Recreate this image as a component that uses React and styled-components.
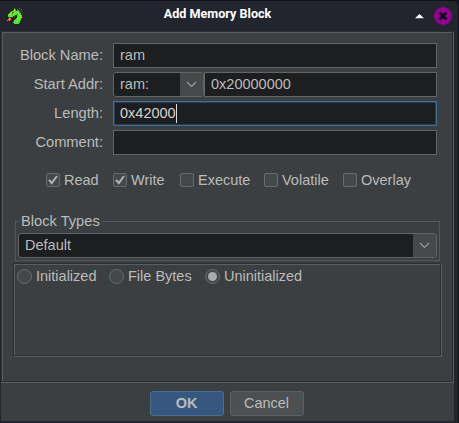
import React from 'react';
import styled, { createGlobalStyle, css } from 'styled-components';

const Global = createGlobalStyle`
  * { box-sizing: border-box; }
  body { margin: 0; background: #14151b; overflow: hidden; }
`;

const Dialog = styled.div`
  width: 459px;
  height: 423px;
  padding: 0 5px 2px 1px;
  background: #22252e;
  border-top: 1px solid #0f1015;
  border-right: 1px solid #14151b;
  border-top-right-radius: 6px;
  font-family: "Liberation Sans", Arial, sans-serif;
  font-size: 14.5px;
  line-height: 17px;
  color: #bbbbbb;
`;

const TitleBar = styled.header`
  display: flex;
  align-items: center;
  height: 30px;
  padding-left: 6px;
  margin-right: -4px;
`;

const Title = styled.h1`
  flex: 1;
  margin: 0;
  padding: 0 3px 4px 0;
  text-align: center;
  font: 700 12.6px/16px Roboto, "Liberation Sans", sans-serif;
  color: #ffffff;
`;

const ShadeIcon = styled.svg`
  width: 9px;
  height: 5px;
  margin-right: 10px;
`;

const CloseButton = styled.svg`
  width: 18px;
  height: 18px;
  margin-right: 5px;
`;

const DragonIcon = styled.svg`
  flex: none;
  width: 16px;
  height: 16px;
`;

const etched = css`
  border: 1px solid #2b2d2e;
  box-shadow: inset 1px 1px 0 #5b5e60, 1px 1px 0 #5b5e60;
`;

const Body = styled.main`
  ${etched}
  display: flex;
  flex-direction: column;
  width: 452px;
  height: 351px;
  padding: 11px 0 0 11px;
  background: #3c3f41;
`;

const Footer = styled.footer`
  display: flex;
  justify-content: center;
  gap: 6px;
  width: 453px;
  height: 39px;
  padding: 8px 2px 0 0;
  background: #3c3f41;
  border-top: 1px solid #5b5e60;
`;

const Form = styled.div`
  display: grid;
  grid-template-columns: 90px 324px;
  column-gap: 10px;
  row-gap: 4px;
`;

const Label = styled.label`
  height: 25px;
  line-height: 25px;
  text-align: right;
  font-size: 14.67px;
`;

const Field = styled.div`
  display: flex;
  align-items: center;
  flex: 1;
  height: 25px;
  padding-left: 6px;
  background: #1d1e20;
  border: 1px solid ${p => (p.$focused ? '#466d94' : '#646464')};
  ${p => p.$focused && 'box-shadow: inset 0 0 0 1px #263f5b; color: #d4d4d4;'}
`;

const Caret = styled.span`
  width: 1px;
  height: 19px;
  background: #dddddd;
`;

const AddressRow = styled.div`
  display: flex;
`;

const ComboBox = styled.div`
  display: flex;
  width: ${p => p.$width}px;
  height: 25px;
  line-height: 23px;
  background: #1d1e20;
  border: 1px solid #646464;
  border-radius: 3px;
  overflow: hidden;
`;

const ComboText = styled.span`
  flex: 1;
  padding-left: 6px;
`;

const ComboArrow = styled.span`
  display: flex;
  align-items: center;
  justify-content: center;
  width: 23px;
  background: #45494a;
`;

const Checks = styled.div`
  display: grid;
  grid-template-columns: 67px 67px 84px 79px 80px;
  margin: 17px 0 0 33px;
  height: 16px;
`;

const CheckItem = styled.div`
  display: flex;
  align-items: center;
  gap: 4px;
  height: 16px;
  white-space: nowrap;
`;

const CheckMark = styled.span`
  display: flex;
  width: 14px;
  height: 14px;
  background: #43494a;
  border: 1px solid #6b6b6b;
  border-radius: 2px;
`;

const Group = styled.fieldset`
  width: 425px;
  height: 48px;
  margin: 25px 0 0 2px;
  padding: 3px 2px 0;
  border: 1px solid #55585a;
`;

const Legend = styled.legend`
  height: 17px;
  margin-left: 1px;
  padding: 0 2px;
  line-height: 17px;
  font-size: 14.67px;
`;

const Options = styled.section`
  ${etched}
  display: flex;
  width: 428px;
  height: 93px;
  margin: 2px 0 0;
  padding: 5px 0 0 3px;
`;

const RadioItem = styled.div`
  display: flex;
  align-items: center;
  gap: 4px;
  width: ${p => p.$width}px;
  height: 15px;
  white-space: nowrap;
`;

const RadioMark = styled.span`
  display: flex;
  align-items: center;
  justify-content: center;
  width: 15px;
  height: 15px;
  background: #43494a;
  border: 1px solid #6b6b6b;
  border-radius: 50%;
`;

const RadioDot = styled.span`
  width: 9px;
  height: 9px;
  border-radius: 50%;
  background: #ababab;
`;

const Button = styled.button`
  width: 74px;
  height: 25px;
  padding: 0;
  font: inherit;
  font-weight: ${p => (p.$primary ? 700 : 400)};
  line-height: 23px;
  color: #bbbbbb;
  background: ${p => (p.$primary ? '#365880' : '#4c5052')};
  border: 1px solid ${p => (p.$primary ? '#4c708c' : '#5e6060')};
  border-radius: 3px;
`;

const dragonPixels = [
  '.......d....d...',
  '......kGd.dkk.d.',
  '....kkgGgkgdkr..',
  '...kgggGgGggdkr.',
  '..kgGrrgGgGGgk..',
  '.kgGgrwGgGgGggkr',
  '.gGGGgggGgdGGgk.',
  'kGgGggGgkkggGGgk',
  'kggGGgkdkkgGgGgk',
  '.kdkkrk..kGgGGgr',
  '..wokk..kgGgGgdk',
  '.oook..kgGgGGgk.',
  'orok...gGgGgGdk.',
  '......kGgGGggk..',
  '......gGgGggGk..',
  '......kgggGgk...',
];
const dragonColors = {
  g: '#43d832', G: '#78ef40', d: '#2c9926', k: '#17261a',
  r: '#b53528', o: '#f27824', w: '#dbe3c6',
};

function Dragon() {
  return (
    <DragonIcon viewBox="0 0 16 16" shapeRendering="crispEdges">
      {dragonPixels.flatMap((row, y) =>
        [...row].map((c, x) =>
          c === '.' ? null : (
            <rect key={`${x}-${y}`} x={x} y={y} width="1" height="1" fill={dragonColors[c]} />
          )
        )
      )}
    </DragonIcon>
  );
}

function Combo({ width, children }) {
  return (
    <ComboBox $width={width}>
      <ComboText>{children}</ComboText>
      <ComboArrow>
        <svg width="11" height="7" viewBox="0 0 11 7">
          <path d="M1 1 L5.5 5.5 L10 1" fill="none" stroke="#9a9da0" strokeWidth="1.2" />
        </svg>
      </ComboArrow>
    </ComboBox>
  );
}

function Check({ label, checked }) {
  return (
    <CheckItem>
      <CheckMark>
        {checked && (
          <svg width="12" height="12" viewBox="0 0 12 12">
            <path d="M2 5.8 L4.8 9.2 L10 2" fill="none" stroke="#b4b4b4" strokeWidth="2" />
          </svg>
        )}
      </CheckMark>
      {label}
    </CheckItem>
  );
}

function Radio({ label, checked, width }) {
  return (
    <RadioItem $width={width}>
      <RadioMark>{checked && <RadioDot />}</RadioMark>
      {label}
    </RadioItem>
  );
}

export default function App() {
  return (
    <>
      <Global />
      <Dialog>
        <TitleBar>
          <Dragon />
          <Title>Add Memory Block</Title>
          <ShadeIcon viewBox="0 0 9 5">
            <path d="M0 4.3 L4.5 0 L9 4.3 Z" fill="#ffffff" />
          </ShadeIcon>
          <CloseButton viewBox="0 0 18 18">
            <circle cx="9" cy="9" r="9" fill="#950095" />
            <path d="M5.5 5.5 L12.5 12.5 M12.5 5.5 L5.5 12.5" stroke="#0c0c10" strokeWidth="2.5" />
          </CloseButton>
        </TitleBar>
        <Body>
          <Form>
            <Label>Block Name:</Label>
            <Field>ram</Field>
            <Label>Start Addr:</Label>
            <AddressRow>
              <Combo width={91}>ram:</Combo>
              <Field>0x20000000</Field>
            </AddressRow>
            <Label>Length:</Label>
            <Field $focused>0x42000<Caret /></Field>
            <Label>Comment:</Label>
            <Field />
          </Form>
          <Checks>
            <Check label="Read" checked />
            <Check label="Write" checked />
            <Check label="Execute" />
            <Check label="Volatile" />
            <Check label="Overlay" />
          </Checks>
          <Group>
            <Legend>Block Types</Legend>
            <Combo width={419}>Default</Combo>
          </Group>
          <Options>
            <Radio label="Initialized" width={92} />
            <Radio label="File Bytes" width={96} />
            <Radio label="Uninitialized" checked width={100} />
          </Options>
        </Body>
        <Footer>
          <Button $primary>OK</Button>
          <Button>Cancel</Button>
        </Footer>
      </Dialog>
    </>
  );
}
